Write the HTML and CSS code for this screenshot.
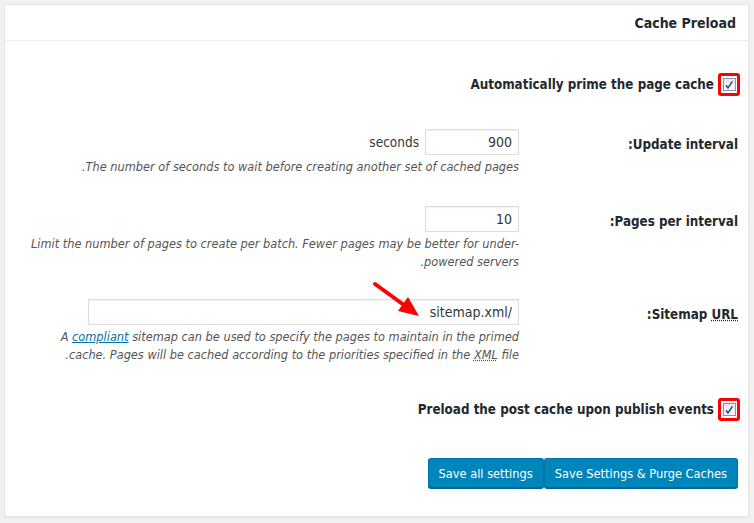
FILE: index.html
```html
<!DOCTYPE html>
<html lang="en" dir="rtl">
  <head>
    <meta charset="UTF-8" />
    <meta name="viewport" content="width=device-width, initial-scale=1.0" />
    <title>Cache Preload</title>

    <link rel="stylesheet" href="styles.css">
  </head>

  <body>
    <div class="postbox">
      <h3 class="hndle">Cache Preload</h3>

      <div class="inside">
        <div class="check-row first">
          <label>
            <span class="mark"><span class="box"><svg width="10" height="10" viewBox="0 0 10 10"><path d="M2 5.2 L4 8 L8.4 1.4" fill="none" stroke="#2f43a0" stroke-width="1.5"/></svg></span></span>
            Automatically prime the page cache
          </label>
        </div>

        <div class="field">
          <div class="th"><label>Update interval:</label></div>
          <div class="td">
            <div class="line"><input type="text" class="small-text" value="900" /> seconds</div>
            <p class="description">The number of seconds to wait before creating another set of cached pages.</p>
          </div>
        </div>

        <div class="field">
          <div class="th"><label>Pages per interval:</label></div>
          <div class="td">
            <div class="line"><input type="text" class="small-text" value="10" /></div>
            <p class="description">Limit the number of pages to create per batch. Fewer pages may be better for under-powered servers.</p>
          </div>
        </div>

        <div class="field sitemap">
          <div class="th"><label>Sitemap <abbr>URL</abbr>:</label></div>
          <div class="td">
            <div class="line"><input type="text" class="regular-text" value="/sitemap.xml" /></div>
            <p class="description">A <a href="#">compliant</a> sitemap can be used to specify the pages to maintain in the primed cache. Pages will be cached according to the priorities specified in the <abbr>XML</abbr> file.</p>
          </div>
        </div>

        <div class="check-row last">
          <label>
            <span class="mark"><span class="box"><svg width="10" height="10" viewBox="0 0 10 10"><path d="M2 5.2 L4 8 L8.4 1.4" fill="none" stroke="#2f43a0" stroke-width="1.5"/></svg></span></span>
            Preload the post cache upon publish events
          </label>
        </div>

        <div class="submit">
          <button class="button-primary">Save Settings &amp; Purge Caches</button>
          <button class="button-primary">Save all settings</button>
        </div>
      </div>

      <!-- annotation arrow -->
      <svg class="arrow" width="60" height="45" viewBox="0 0 60 45">
        <line x1="5" y1="4" x2="34" y2="25" stroke="#f00" stroke-width="4" stroke-linecap="round" />
        <polygon points="49,36 38,17 28,31" fill="#f00" />
      </svg>
    </div>
  </body>
</html>
```

FILE: styles.css
```css
body {
  margin: 0;
  background-color: #f1f1f1;
  color: #23282d;
  font-family: "DejaVu Sans Condensed", "DejaVu Sans", sans-serif;
  font-stretch: condensed;
  font-size: 13px;
}

.postbox {
  position: relative;
  margin: 4px 5px 6px 4px;
  background-color: #fff;
  border: 1px solid #e5e5e5;
  box-shadow: 0 1px 1px rgba(0, 0, 0, 0.04);
}

.hndle {
  margin: 0;
  height: 35px;
  line-height: 36px;
  padding: 0 12px;
  font-size: 14px;
  border-bottom: 1px solid #eee;
}

.check-row {
  display: flex;
  padding: 32px 8px 18px 0;
  font-size: 13.3px;
  font-weight: bold;
}

.check-row.last {
  padding: 19px 8px 18px 0;
}

.check-row label {
  display: flex;
  align-items: center;
  gap: 4px;
}

.mark {
  display: flex;
  align-items: center;
  justify-content: center;
  width: 16px;
  height: 17px;
  border: 3px solid #f00;
  border-radius: 3px;
}

.box {
  display: flex;
  align-items: center;
  justify-content: center;
  width: 11px;
  height: 11px;
  border: 1px solid #8f94a3;
  background: linear-gradient(#e4e6ea, #fbfbfc);
}

.field {
  display: grid;
  grid-template-columns: 219px 1fr;
  padding: 15px 0;
}

.field.sitemap {
  padding-top: 13px;
}

.th {
  padding: 8px 10px 0 0;
  font-size: 13.3px;
  font-weight: bold;
}

.td {
  padding: 0 10px 0 20px;
}

.line {
  display: flex;
  align-items: center;
  gap: 6px;
  font-size: 13.5px;
  color: #32373c;
}

input {
  height: 26px;
  box-sizing: border-box;
  padding: 0 6px;
  border: 1px solid #ddd;
  box-shadow: inset 0 1px 2px rgba(0, 0, 0, 0.07);
  color: #32373c;
  font-family: inherit;
  font-stretch: condensed;
  font-size: 14px;
}

.small-text {
  width: 94px;
}

.regular-text {
  width: 431px;
}

.description {
  margin: 3px 0 0;
  max-width: 494px;
  line-height: 18px;
  font-size: 12.65px;
  font-style: italic;
  color: #555;
}

.description a {
  color: #0073aa;
}

abbr {
  text-decoration: underline dotted;
}

.submit {
  display: flex;
  padding: 19px 10px 28px 0;
}

.button-primary {
  height: 30px;
  padding: 0 10px;
  background-color: #0085ba;
  border: 1px solid #0073aa;
  border-bottom-color: #006799;
  border-radius: 3px;
  box-shadow: 0 1px 0 #006799;
  color: #fff;
  font-family: inherit;
  font-stretch: condensed;
  font-size: 12.7px;
}

.arrow {
  position: absolute;
  left: 365px;
  top: 275px;
}
```
